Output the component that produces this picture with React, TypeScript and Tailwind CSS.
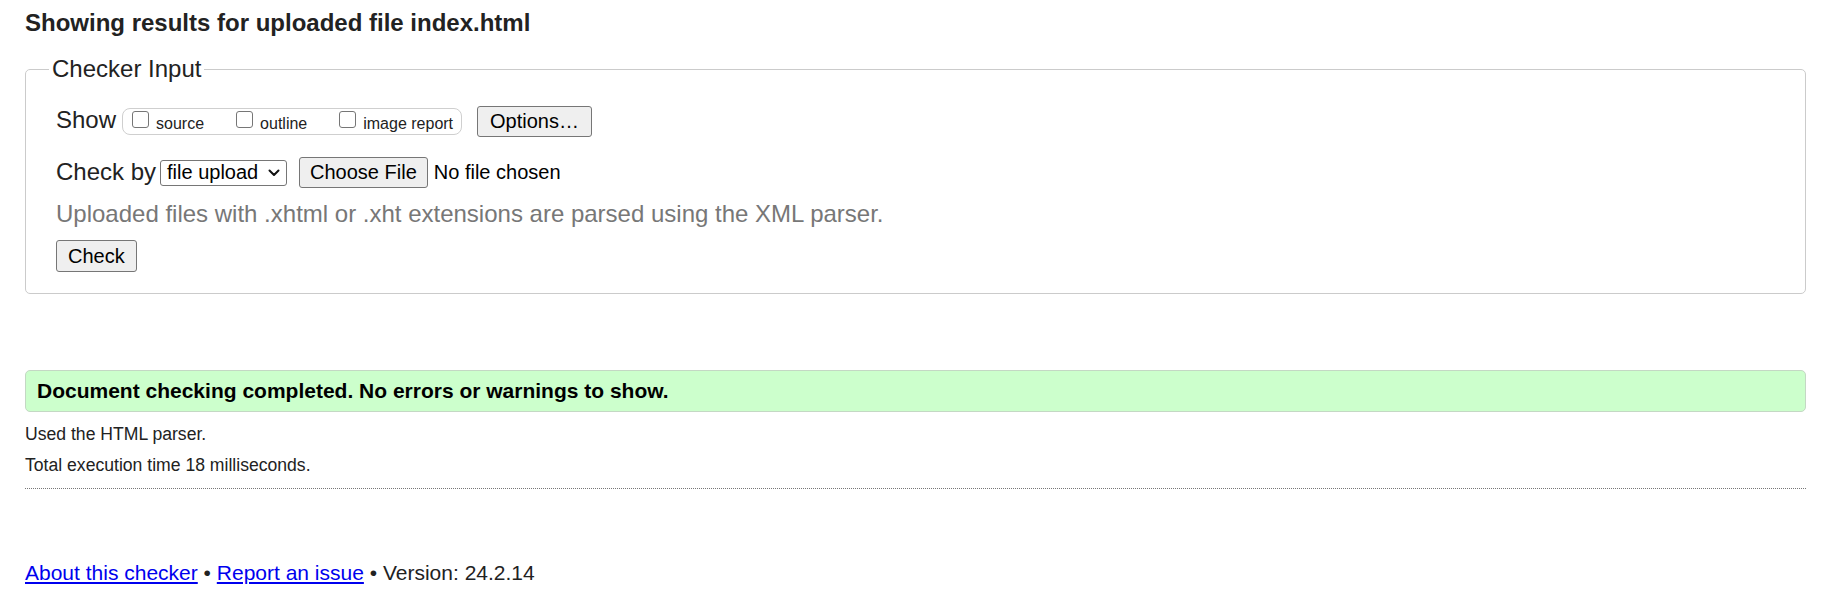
import React from 'react'

function Box({ label }: { label: string }) {
  return (
    <label className="flex items-end">
      <span className="mb-[5px] h-[17px] w-[17px] rounded-[3px] border border-[#767676] bg-white" />
      <span className="ml-[7px] text-[16px] leading-[18px]">{label}</span>
    </label>
  )
}

export default function App() {
  return (
    <div className="min-h-screen bg-white pl-[25px] pr-[16px] font-['Liberation_Sans',Arial,sans-serif] text-[#222]">
      <h2 className="pt-[9px] text-[24px] font-bold leading-[28px]">Showing results for uploaded file index.html</h2>

      <fieldset className="mt-[18px] rounded-[5px] border border-[#cbcbcb] pl-[30px] pb-[21px]">
        <legend className="-ml-[7px] px-[3px] text-[24px] leading-[28px]">Checker Input</legend>

        <div className="mt-[21px] flex h-[35px] items-center">
          <span className="mb-[4px] text-[24px] leading-[28px]">Show</span>
          <div className="ml-[6px] flex h-[27px] items-center gap-[32px] rounded-[8px] border border-[#cfcfcf] pl-[9px] pr-[8px]">
            <Box label="source" />
            <Box label="outline" />
            <Box label="image report" />
          </div>
          <button className="ml-[15px] h-[31px] rounded-[3px] border border-[#767676] bg-[#efefef] px-[12px] text-[20px] leading-[23px] text-black">
            Options…
          </button>
        </div>

        <div className="mt-[16px] flex h-[35px] items-center">
          <span className="mb-[2px] text-[24px] leading-[28px]">Check by</span>
          <div className="ml-[4px] flex h-[26px] w-[127px] items-center justify-between rounded-[3px] border border-[#767676] bg-white pl-[6px] pr-[6px] text-[20px] leading-[23px] text-black">
            <span>file upload</span>
            <svg width="12" height="8" viewBox="0 0 12 8" fill="none">
              <path d="M1.5 1.5 6 6l4.5-4.5" stroke="#111" strokeWidth="2" strokeLinecap="round" strokeLinejoin="round" />
            </svg>
          </div>
          <button className="ml-[12px] h-[31px] rounded-[3px] border border-[#767676] bg-[#efefef] px-[10px] text-[20px] leading-[23px] text-black">
            Choose File
          </button>
          <span className="ml-[6px] text-[20px] leading-[23px] text-black">No file chosen</span>
        </div>

        <p className="mt-[10px] text-[24px] leading-[28px] text-[#777]">
          Uploaded files with .xhtml or .xht extensions are parsed using the XML parser.
        </p>

        <button className="mt-[12px] h-[32px] rounded-[3px] border border-[#767676] bg-[#efefef] px-[11px] text-[20px] leading-[23px] text-black">
          Check
        </button>
      </fieldset>

      <div className="mt-[76px] flex h-[42px] items-center rounded-[5px] border border-[#c4d8c4] bg-[#ccffcc] pl-[11px]">
        <p className="text-[21px] font-bold leading-[24px] text-black">
          Document checking completed. No errors or warnings to show.
        </p>
      </div>

      <p className="mt-[12px] text-[17.6px] leading-[20px]">Used the HTML parser.</p>
      <p className="mt-[11px] text-[17.6px] leading-[20px]">Total execution time 18 milliseconds.</p>

      <div className="mt-[13px] border-t border-dotted border-[#777]" />

      <p className="mt-[72px] text-[21px] leading-[24px]">
        <a href="#" className="text-[#0000ee] underline">About this checker</a>
        {' • '}
        <a href="#" className="text-[#0000ee] underline">Report an issue</a>
        {' • Version: 24.2.14'}
      </p>
    </div>
  )
}
